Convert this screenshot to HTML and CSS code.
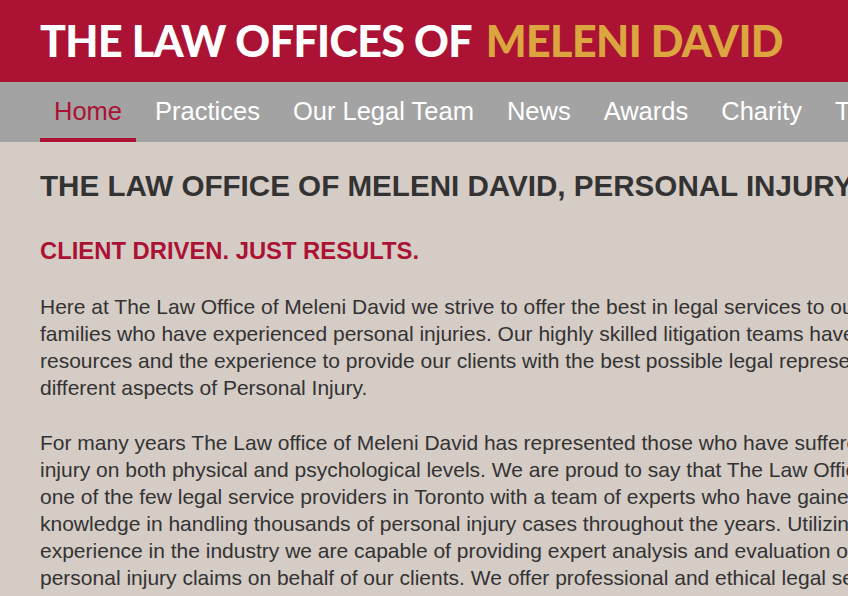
FILE: index.html
```html
<!DOCTYPE html>
<html lang="en">
<head>
    <meta charset="UTF-8">
    <meta name="viewport" content="width=device-width, initial-scale=1.0">
    <title>The Law Offices of Meleni David</title>
    <link rel="stylesheet" href="styles.css">
</head>
<body>
    <!-- Header -->
    <header class="site-header">
        <div class="logo">
            <span class="logo-white">THE LAW OFFICES OF</span>
            <span class="logo-gold">MELENI DAVID</span>
        </div>
    </header>

    <!-- Navigation -->
    <nav class="main-nav">
        <a href="#" class="nav-link active">Home</a>
        <a href="#" class="nav-link">Practices</a>
        <a href="#" class="nav-link">Our Legal Team</a>
        <a href="#" class="nav-link">News</a>
        <a href="#" class="nav-link">Awards</a>
        <a href="#" class="nav-link">Charity</a>
        <a href="#" class="nav-link">Testimonials</a>
        <a href="#" class="nav-link">Contact</a>
    </nav>

    <!-- Main Content -->
    <main class="content">
        <h1>THE LAW OFFICE OF MELENI DAVID, PERSONAL INJURY LAWYERS</h1>
        <h2>CLIENT DRIVEN. JUST RESULTS.</h2>
        <p>Here at The Law Office of Meleni David we strive to offer the best in legal services to our injured clients and their families who have experienced personal injuries. Our highly skilled litigation teams have the knowledge, the resources and the experience to provide our clients with the best possible legal representation in each of the different aspects of Personal Injury.</p>
        <p>For many years The Law office of Meleni David has represented those who have suffered a serious personal injury on both physical and psychological levels. We are proud to say that The Law Office of Meleni David is now one of the few legal service providers in Toronto with a team of experts who have gained the expertise and knowledge in handling thousands of personal injury cases throughout the years. Utilizing our many years of experience in the industry we are capable of providing expert analysis and evaluation of the merits and value of personal injury claims on behalf of our clients. We offer professional and ethical legal services to our clients and free of charge in cases which include those of Motor vehicle accidents, Slip and fall accidents and more.</p>
    </main>
</body>
</html>
```

FILE: styles.css
```css
html, body {
    overflow: hidden;
}

body {
    margin: 0;
    padding: 0;
    min-width: 1140px;
    background: #d5ccc6;
    font-family: "Liberation Sans", Arial, sans-serif;
    color: #333;
}

.site-header {
    height: 82px;
    background: #ab1233;
    display: flex;
    align-items: center;
    padding: 0 40px 2px;
    box-sizing: border-box;
}

.logo {
    font-family: "Lato", sans-serif;
    font-weight: 900;
    font-size: 43px;
    line-height: 1;
    letter-spacing: -0.6px;
    white-space: nowrap;
}

.logo-white {
    color: #fff;
}

.logo-gold {
    color: #dba53f;
    margin-left: 5px;
}

.main-nav {
    height: 60px;
    background: #a3a3a3;
    display: flex;
    gap: 5px;
    padding: 0 40px;
    white-space: nowrap;
}

.nav-link {
    display: flex;
    align-items: center;
    padding: 2px 14px 0;
    font-size: 25.5px;
    color: #fff;
    text-decoration: none;
    border-bottom: 4px solid transparent;
}

.nav-link.active {
    color: #ab1233;
    border-bottom-color: #ab1233;
}

.content {
    width: 1060px;
    padding: 0 40px;
}

.content h1 {
    margin: 27px 0 0;
    font-size: 29.6px;
    white-space: nowrap;
}

.content h2 {
    margin: 34px 0 0;
    font-size: 23.8px;
    color: #ab1233;
}

.content p {
    margin: 28px 0 27px;
    font-size: 21px;
    line-height: 27px;
}
```
